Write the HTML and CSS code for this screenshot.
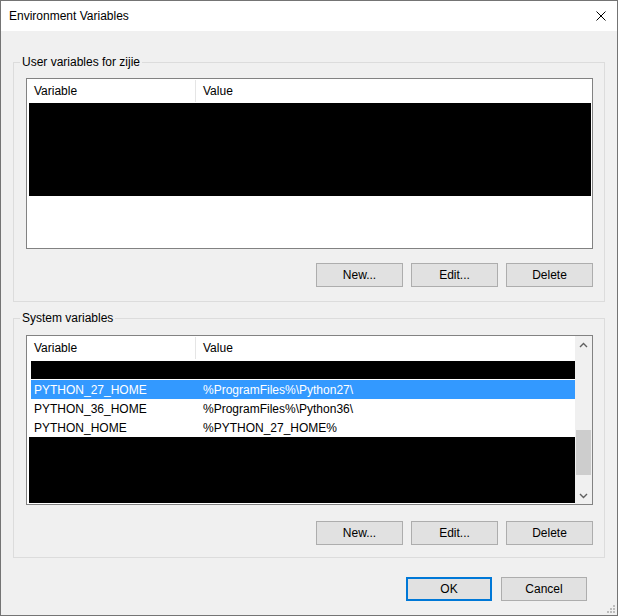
FILE: index.html
```html
<!DOCTYPE html>
<html>
<head>
<meta charset="utf-8">
<title>Environment Variables</title>
<link rel="stylesheet" href="styles.css">
</head>
<body>
<div class="window">
  <div class="titlebar">
    <span class="title">Environment Variables</span>
    <svg class="close" width="10" height="10" viewBox="0 0 10 10"><path d="M0.5 0.5 L9.5 9.5 M9.5 0.5 L0.5 9.5" stroke="#000" stroke-width="1" fill="none"/></svg>
  </div>
  <div class="client">
    <fieldset class="group group-user">
      <legend>User variables for zijie</legend>
      <div class="listview lv-user">
        <div class="lv-area">
          <div class="lv-header">
            <div class="hcol hcol-var">Variable</div>
            <div class="hcol hcol-val">Value</div>
          </div>
          <div class="redacted user-block"></div>
        </div>
      </div>
      <div class="btn-row">
        <button class="btn">New...</button>
        <button class="btn">Edit...</button>
        <button class="btn">Delete</button>
      </div>
    </fieldset>

    <fieldset class="group group-system">
      <legend>System variables</legend>
      <div class="listview lv-system">
        <div class="lv-area">
          <div class="lv-header">
            <div class="hcol hcol-var">Variable</div>
            <div class="hcol hcol-val">Value</div>
          </div>
          <div class="rows">
            <div class="redacted sys-top"></div>
            <div class="row selected"><span class="cell cell-var">PYTHON_27_HOME</span><span class="cell">%ProgramFiles%\Python27\</span></div>
            <div class="row"><span class="cell cell-var">PYTHON_36_HOME</span><span class="cell">%ProgramFiles%\Python36\</span></div>
            <div class="row"><span class="cell cell-var">PYTHON_HOME</span><span class="cell">%PYTHON_27_HOME%</span></div>
          </div>
          <div class="redacted sys-bottom"></div>
        </div>
        <div class="scrollbar">
          <div class="sb-btn">
            <svg width="9" height="6" viewBox="0 0 9 6"><path d="M1 5 L4.5 1.5 L8 5" stroke="#606060" stroke-width="1.4" fill="none"/></svg>
          </div>
          <div class="sb-track"><div class="sb-thumb"></div></div>
          <div class="sb-btn">
            <svg width="9" height="6" viewBox="0 0 9 6"><path d="M1 1 L4.5 4.5 L8 1" stroke="#606060" stroke-width="1.4" fill="none"/></svg>
          </div>
        </div>
      </div>
      <div class="btn-row">
        <button class="btn">New...</button>
        <button class="btn">Edit...</button>
        <button class="btn">Delete</button>
      </div>
    </fieldset>

    <div class="dialog-buttons">
      <button class="btn btn-dlg btn-default">OK</button>
      <button class="btn btn-dlg">Cancel</button>
    </div>
    <svg class="grip" width="10" height="10" viewBox="0 0 10 10">
      <rect x="7" y="1" width="2" height="2" fill="#bcbcbc"/>
      <rect x="4" y="4" width="2" height="2" fill="#bcbcbc"/>
      <rect x="7" y="4" width="2" height="2" fill="#bcbcbc"/>
      <rect x="1" y="7" width="2" height="2" fill="#bcbcbc"/>
      <rect x="4" y="7" width="2" height="2" fill="#bcbcbc"/>
      <rect x="7" y="7" width="2" height="2" fill="#bcbcbc"/>
    </svg>
  </div>
</div>
</body>
</html>
```
FILE: styles.css
```css
* { box-sizing: border-box; }
html, body { margin: 0; padding: 0; background: #f0f0f0; }
body {
  font-family: "Liberation Sans", Arial, sans-serif;
  font-size: 12px;
  color: #000;
}
.window {
  width: 618px;
  height: 616px;
  border: 1px solid #747474;
  background: #f0f0f0;
  display: flex;
  flex-direction: column;
}
.titlebar {
  height: 30px;
  background: #fff;
  display: flex;
  align-items: center;
  justify-content: space-between;
  padding: 0 11px 0 8px;
}
.title { font-size: 12px; line-height: 16px; }
.close { display: block; }
.client {
  flex: 1;
  display: flex;
  flex-direction: column;
  position: relative;
}
.group {
  margin: 0 12px;
  border: 1px solid #dcdcdc;
  padding: 8px 11px 14px 12px;
  min-width: 0;
}
.group legend {
  font-size: 12px;
  line-height: 16px;
  padding: 0 2px;
  margin-left: -6px;
}
.group-user { margin-top: 23px; }
.group-system { margin-top: 8px; padding-top: 9px; padding-bottom: 12px; }

.listview {
  border: 1px solid #828282;
  background: #fff;
  display: flex;
}
.lv-user { height: 171px; }
.lv-system { height: 170px; }
.lv-area {
  flex: 1;
  display: flex;
  flex-direction: column;
  min-width: 0;
}
.lv-header {
  height: 24px;
  display: flex;
  align-items: center;
  flex-shrink: 0;
}
.hcol {
  height: 24px;
  line-height: 24px;
  padding-left: 7px;
}
.hcol-var {
  width: 169px;
  border-right: 1px solid #e5e5e5;
  height: 22px;
  line-height: 22px;
}
.hcol-val { flex: 1; }
.redacted { background: #000; }
.user-block { height: 93px; margin: 0 1px 0 2px; }

.rows {
  padding-left: 4px;
  padding-top: 1px;
}
.sys-top { height: 18px; margin-bottom: 1px; }
.row {
  height: 19px;
  display: flex;
  align-items: center;
  white-space: nowrap;
}
.row.selected { background: #3399ff; color: #fff; }
.cell { padding-left: 3px; }
.cell-var { width: 169px; flex-shrink: 0; }
.sys-bottom { height: 66px; margin-left: 2px; }

.scrollbar {
  width: 17px;
  background: #f0f0f0;
  display: flex;
  flex-direction: column;
  flex-shrink: 0;
}
.sb-btn {
  height: 17px;
  display: flex;
  align-items: center;
  justify-content: center;
}
.sb-btn svg { display: block; }
.sb-track { flex: 1; padding: 77px 1px 0 1px; }
.sb-thumb { height: 45px; background: #cdcdcd; }

.btn-row {
  display: flex;
  justify-content: flex-end;
  gap: 8px;
  margin-top: 14px;
}
.group-system .btn-row { margin-top: 16px; }
.btn {
  width: 87px;
  height: 24px;
  background: #e1e1e1;
  border: 1px solid #adadad;
  font-family: "Liberation Sans", Arial, sans-serif;
  font-size: 12px;
  color: #000;
  padding: 0;
  margin: 0;
}
.dialog-buttons {
  display: flex;
  justify-content: flex-end;
  gap: 9px;
  margin-top: 19px;
  padding-right: 30px;
}
.btn-dlg { width: 86px; }
.btn-default { border: 2px solid #0078d7; }
.grip {
  position: absolute;
  right: 1px;
  bottom: 1px;
}
```
